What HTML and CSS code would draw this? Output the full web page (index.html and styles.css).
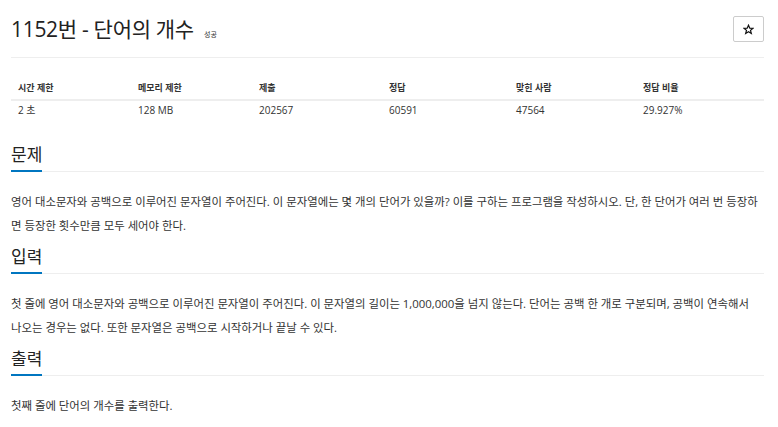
FILE: index.html
```html
<!DOCTYPE html>
<html lang="ko">
<head>
  <meta charset="UTF-8">
  <meta name="viewport" content="width=device-width, initial-scale=1.0">
  <title>1152번: 단어의 개수</title>
  <link rel="stylesheet" href="styles.css">
</head>
<body>
  <div class="container">
    <div class="page-header">
      <h1 class="title">1152번 - 단어의 개수 <span class="label">성공</span></h1>
      <button class="star-btn" type="button">
        <svg width="11" height="11" viewBox="0 0 24 24"><polygon points="12,2.5 14.8,9 21.8,9.4 16.4,13.9 18.2,20.8 12,17 5.8,20.8 7.6,13.9 2.2,9.4 9.2,9" fill="none" stroke="#111" stroke-width="2.6" stroke-linejoin="miter"/></svg>
      </button>
    </div>

    <table class="info-table">
      <thead>
        <tr>
          <th class="c1">시간 제한</th>
          <th class="c2">메모리 제한</th>
          <th class="c3">제출</th>
          <th class="c4">정답</th>
          <th class="c5">맞힌 사람</th>
          <th>정답 비율</th>
        </tr>
      </thead>
      <tbody>
        <tr>
          <td>2 초</td>
          <td>128 MB</td>
          <td>202567</td>
          <td>60591</td>
          <td>47564</td>
          <td>29.927%</td>
        </tr>
      </tbody>
    </table>

    <section class="problem-section">
      <div class="headline"><h2>문제</h2></div>
      <p>영어 대소문자와 공백으로 이루어진 문자열이 주어진다. 이 문자열에는 몇 개의 단어가 있을까? 이를 구하는 프로그램을 작성하시오. 단, 한 단어가 여러 번 등장하면 등장한 횟수만큼 모두 세어야 한다.</p>
    </section>

    <section class="problem-section">
      <div class="headline"><h2>입력</h2></div>
      <p class="keep-words">첫 줄에 영어 대소문자와 공백으로 이루어진 문자열이 주어진다. 이 문자열의 길이는 1,000,000을 넘지 않는다. 단어는 공백 한 개로 구분되며, 공백이 연속해서 나오는 경우는 없다. 또한 문자열은 공백으로 시작하거나 끝날 수 있다.</p>
    </section>

    <section class="problem-section">
      <div class="headline"><h2>출력</h2></div>
      <p>첫째 줄에 단어의 개수를 출력한다.</p>
    </section>
  </div>
</body>
</html>
```

FILE: styles.css
```css
body {
  margin: 0;
  font-family: "Open Sans", "Noto Sans CJK KR", sans-serif;
  color: #333;
  background: #fff;
}
.container {
  padding: 0 14px 0 11px;
}
/* Header */
.page-header {
  display: flex;
  justify-content: space-between;
  align-items: center;
  padding: 16px 0 15px;
  border-bottom: 1px solid #eee;
}
.title {
  margin: 0;
  font-size: 21px;
  font-weight: normal;
  color: #222;
  line-height: 26px;
  height: 26px;
  letter-spacing: -0.3px;
}
.label {
  font-size: 7px;
  line-height: 1;
  letter-spacing: 0;
  margin-left: 5px;
  color: #333;
}
.star-btn {
  display: flex;
  align-items: center;
  justify-content: center;
  width: 31px;
  height: 26px;
  border: 1px solid #ccc;
  border-radius: 2px;
  background: #fff;
  padding: 0;
  cursor: pointer;
}
/* Info table */
.info-table {
  width: 100%;
  border-collapse: collapse;
  margin-top: 13px;
  table-layout: fixed;
}
.info-table th {
  text-align: left;
  font-size: 9px;
  font-weight: bold;
  line-height: 13px;
  padding: 10px 7px 5px;
  border-bottom: 2px solid #eee;
}
.info-table td {
  font-size: 10px;
  line-height: 13px;
  padding: 3px 7px 8px;
}
.c1 { width: 106px; }
.c2 { width: 107px; }
.c3 { width: 116px; }
.c4 { width: 113px; }
.c5 { width: 113px; }
/* Sections */
.problem-section {
  margin-top: 7px;
}
.problem-section:first-of-type {
  margin-top: 18px;
}
.headline {
  border-bottom: 1px solid #eee;
  margin-bottom: 18px;
}
.headline h2 {
  display: inline-block;
  margin: 0 0 -1px;
  font-size: 17px;
  font-weight: normal;
  color: #222;
  line-height: 24px;
  padding-bottom: 3px;
  border-bottom: 2px solid #0076c0;
}
.problem-section p {
  margin: 0;
  font-size: 11.4px;
  line-height: 24px;
}
.problem-section .keep-words {
  word-break: keep-all;
}
```
